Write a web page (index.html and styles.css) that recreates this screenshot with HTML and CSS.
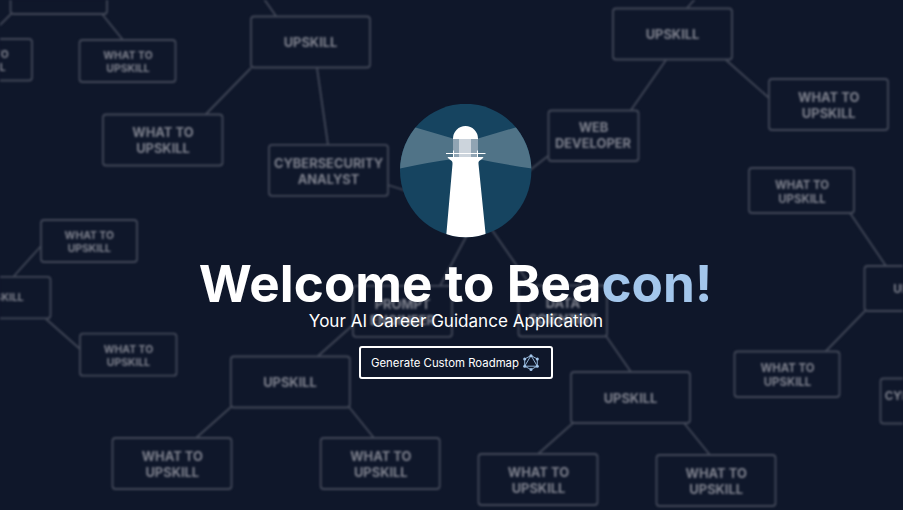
FILE: index.html
```
<!DOCTYPE html>
<html lang="en">
<head>
<meta charset="utf-8">
<title>Beacon</title>
<link rel="stylesheet" href="styles.css">
</head>
<body>
<svg class="map" viewBox="0 0 903 510" aria-hidden="true">
  <g class="links">
    <path d="M11 14L-4 29M102 14L123 40M264 -1L276 16M251 68L206 114M317 68L328 145M388 185L410 192M697 -3L687 8M666 60L631 110M548 156L525 174M726 60L769 98M850 213L886 266M865 311L825 352M41 246L14 276M46 319L80 349M475 220L440 286M485 220L531 286M353 325L318 356M606 336L631 372M231 407L196 438M349 407L374 438M573 423L538 454M684 423L710 455"/>
  </g>
  <g class="boxes">
    <rect x="10.500" y="-28" width="96.500" height="42" rx="3"/>
    <rect x="-64" y="39" width="96" height="41.500" rx="3"/>
    <rect x="79.500" y="40" width="96" height="42" rx="3"/>
    <rect x="103" y="114.500" width="119.500" height="51" rx="3"/>
    <rect x="251" y="16.500" width="119" height="51" rx="3"/>
    <rect x="269" y="144.800" width="119" height="51" rx="3"/>
    <rect x="613" y="8.500" width="119" height="51" rx="3"/>
    <rect x="548.500" y="110.500" width="90" height="50.500" rx="3"/>
    <rect x="769" y="79" width="119" height="51" rx="3"/>
    <rect x="749" y="168" width="105" height="45" rx="3"/>
    <rect x="864.500" y="266" width="105" height="45" rx="3"/>
    <rect x="734.500" y="351.500" width="105" height="45.500" rx="3"/>
    <rect x="880.500" y="378.500" width="105" height="45" rx="3"/>
    <rect x="41" y="220" width="96" height="42" rx="3"/>
    <rect x="-46" y="276.800" width="96.500" height="41.500" rx="3"/>
    <rect x="80" y="333.700" width="96.500" height="42" rx="3"/>
    <rect x="353" y="285.800" width="99" height="51" rx="3"/>
    <rect x="518.500" y="285.500" width="88.500" height="51" rx="3"/>
    <rect x="230.800" y="356.500" width="119" height="51" rx="3"/>
    <rect x="112.500" y="438" width="119" height="51" rx="3"/>
    <rect x="320.700" y="438" width="119" height="51" rx="3"/>
    <rect x="571" y="372" width="119" height="51" rx="3"/>
    <rect x="478.500" y="454" width="119" height="51" rx="3"/>
    <rect x="656.500" y="455" width="119" height="51" rx="3"/>
  </g>
  <g class="labels">
    <text x="310.500" y="47">UPSKILL</text>
    <text x="672.500" y="39">UPSKILL</text>
    <text x="290" y="386.500">UPSKILL</text>
    <text x="630.500" y="402.700">UPSKILL</text>
    <text x="163" y="137">WHAT TO<tspan x="163" dy="16">UPSKILL</tspan></text>
    <text x="328.500" y="168.300">CYBERSECURITY<tspan x="328.500" dy="16">ANALYST</tspan></text>
    <text x="593.500" y="132">WEB<tspan x="593" dy="16">DEVELOPER</tspan></text>
    <text x="828.700" y="102">WHAT TO<tspan x="828.700" dy="16">UPSKILL</tspan></text>
    <text x="402.500" y="309">PROMPT<tspan x="402.500" dy="16">ENGINEER</tspan></text>
    <text x="563" y="307.500">DATA<tspan x="563" dy="16">SCIENTIST</tspan></text>
    <text x="172.300" y="461">WHAT TO<tspan x="172.300" dy="16">UPSKILL</tspan></text>
    <text x="380.800" y="461">WHAT TO<tspan x="380.800" dy="16">UPSKILL</tspan></text>
    <text x="538.500" y="477">WHAT TO<tspan x="538.500" dy="16">UPSKILL</tspan></text>
    <text x="716.200" y="478">WHAT TO<tspan x="716.200" dy="16">UPSKILL</tspan></text>
  </g>
  <g class="labels labels-mid">
    <text x="802" y="188.500">WHAT TO<tspan x="802" dy="14">UPSKILL</tspan></text>
    <text x="787.500" y="372">WHAT TO<tspan x="787.500" dy="14">UPSKILL</tspan></text>
    <text x="917" y="293">UPSKILL</text>
    <text x="933" y="399.500">CYBERSECURITY<tspan x="933" dy="14">ANALYST</tspan></text>
  </g>
  <g class="labels labels-small">
    <text x="128" y="59">WHAT TO<tspan x="128" dy="12.800">UPSKILL</tspan></text>
    <text x="-16" y="58">WHAT TO<tspan x="-16" dy="12.800">UPSKILL</tspan></text>
    <text x="89.300" y="239">WHAT TO<tspan x="89.300" dy="12.800">UPSKILL</tspan></text>
    <text x="2" y="301.400">UPSKILL</text>
    <text x="128.500" y="352.700">WHAT TO<tspan x="128.500" dy="12.800">UPSKILL</tspan></text>
  </g>
</svg>
<main class="hero">
  <svg class="logo" viewBox="0 0 132 134" role="img" aria-label="Beacon lighthouse">
    <defs><clipPath id="disc"><ellipse cx="65.700" cy="66.500" rx="65.700" ry="66.700"/></clipPath></defs>
    <g clip-path="url(#disc)">
      <path fill="#164460" d="M0 0h132v134H0z"/>
      <path fill="#507387" d="M15.500 23.500L53 34.500V55Q30 58 0 64.500V20zM115.500 23.500L78 34.500V55Q101 60 132 64.500V20z"/>
      <path fill="#fff" d="M53 35.500V34.500a12.500 12.500 0 0 1 25 0V35.500zM47.500 53H83.500C82 56.500 78 55.500 78.500 60L86 134H46L52.500 60C53 55.500 49 56.500 47.500 53z"/>
      <path fill="#90a4b3" d="M53 35h25v18H53z"/>
      <path fill="#ccd4dc" d="M59 35h12v18H59z"/>
      <path fill="none" stroke="#fff" d="M46 49.500H85.500M53.500 46.500V54M77.500 46.500V54"/>
    </g>
  </svg>
  <h1 class="title">Welcome to Bea<span class="accent">con!</span></h1>
  <p class="subtitle">Your AI Career Guidance Application</p>
  <button class="cta" type="button">Generate Custom Roadmap
    <svg class="cta-icon" viewBox="0 0 16 17">
      <path class="edges" d="M8 1.500L14.300 5V12.200L8 15.600L1.700 12.200V5zM8 1.500L14.300 12.200H1.700z"/>
      <g><circle cx="8" cy="1.700" r="1.500"/><circle cx="14.300" cy="5" r="1.500"/><circle cx="14.300" cy="12.200" r="1.500"/><circle cx="8" cy="15.400" r="1.500"/><circle cx="1.700" cy="12.200" r="1.500"/><circle cx="1.700" cy="5" r="1.500"/></g>
    </svg>
  </button>
</main>
</body>
</html>
```
FILE: styles.css
```
* { box-sizing: border-box; }
body {
  margin: 0;
  height: 510px;
  overflow: hidden;
  position: relative;
  background: #0f172a;
  color: #fff;
  font-family: Inter, sans-serif;
}
.map {
  position: absolute;
  inset: 0;
  width: 903px;
  height: 510px;
  filter: blur(1.2px);
}
.links, .boxes {
  fill: none;
  stroke: #424858;
  stroke-width: 1.8;
}
.boxes { fill: #0f172a; }
.labels {
  fill: #7f828e;
  font-size: 12.9px;
  font-weight: 700;
  text-anchor: middle;
}
.labels-mid { font-size: 11.4px; }
.labels-small { font-size: 10.4px; }
.hero {
  position: relative;
  display: flex;
  flex-direction: column;
  align-items: center;
  width: 911px;
  padding-top: 104px;
}
.logo {
  width: 132px;
  height: 134px;
  margin-left: 20px;
}
.title {
  margin: 19px 0 0;
  font-size: 51.2px;
  line-height: 52px;
  font-weight: 700;
  letter-spacing: 0.04px;
  white-space: nowrap;
}
.accent { color: #a3c6eb; }
.subtitle {
  margin: 1px 0 0 1px;
  font-size: 17.07px;
  line-height: 22px;
}
.cta {
  display: flex;
  align-items: center;
  gap: 4px;
  width: 194px;
  height: 33px;
  margin: 14px 0 0 1px;
  padding: 0 0 0 10px;
  border: 2px solid #fff;
  border-radius: 3px;
  background: #0f172a;
  color: #fff;
  font: 11.38px/16px Inter, sans-serif;
  white-space: nowrap;
}
.cta-icon {
  width: 16px;
  height: 17px;
  fill: #a3c6eb;
}
.edges {
  fill: none;
  stroke: #a3c6eb;
  stroke-width: 0.9;
}
```
